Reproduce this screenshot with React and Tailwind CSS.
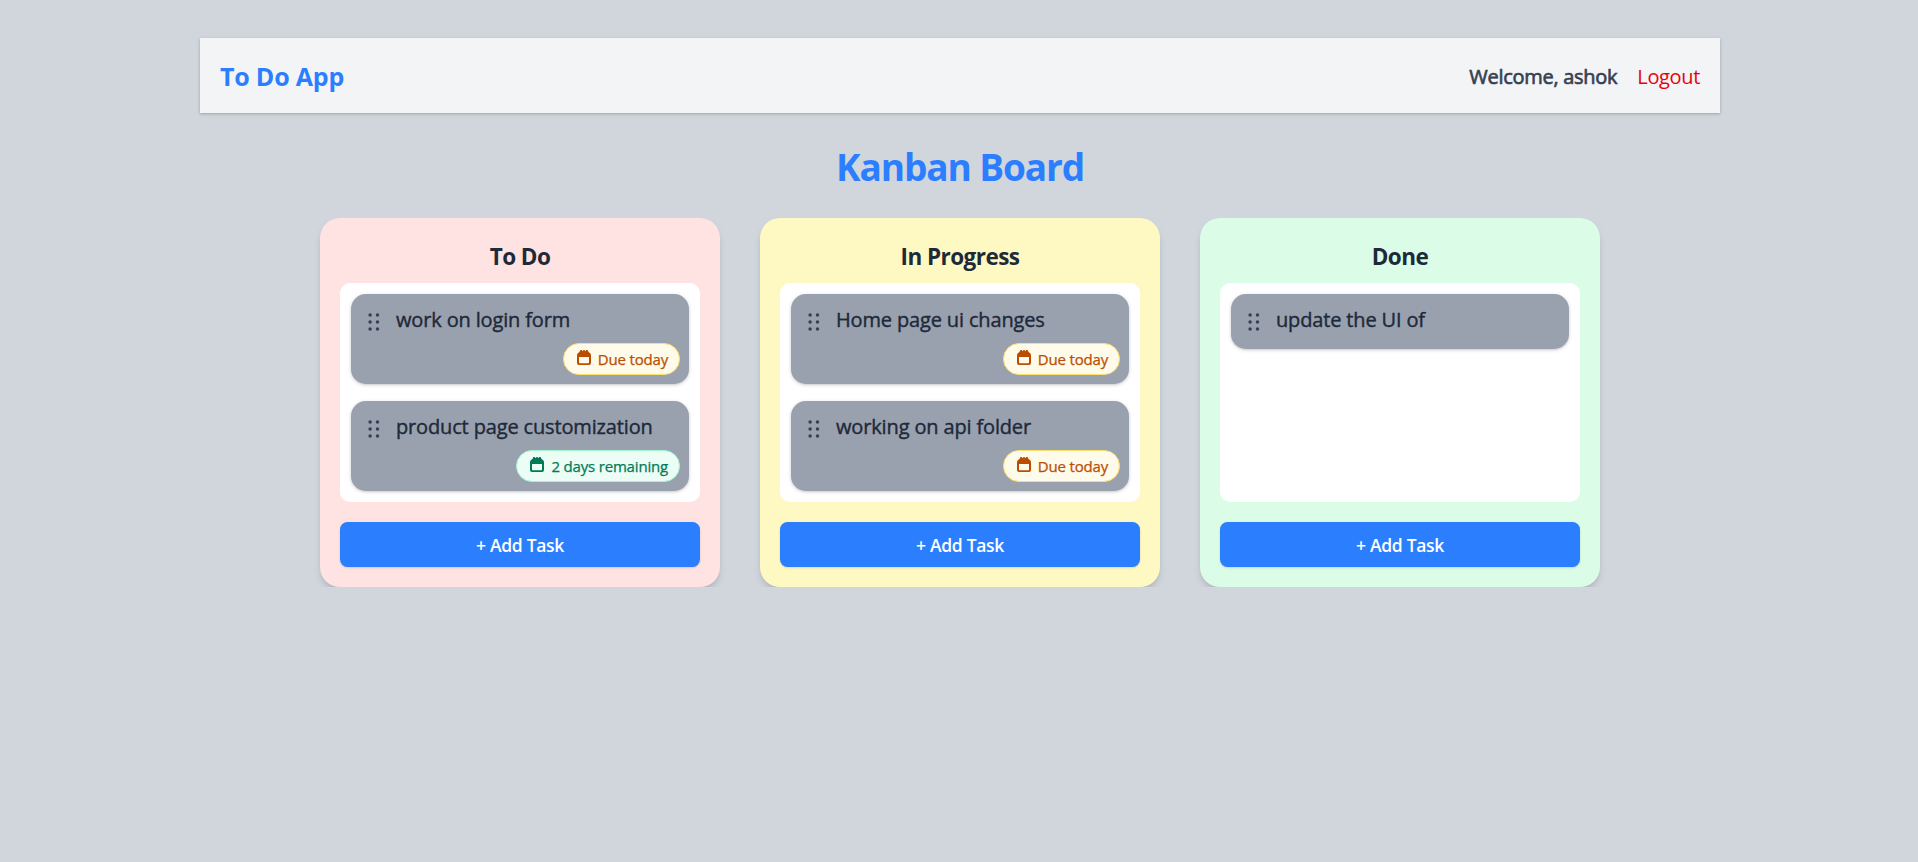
import React from "react";

const columns = [
  {
    title: "To Do",
    tone: "bg-red-100",
    tasks: [
      { text: "work on login form", due: "Due today", tone: "amber" },
      { text: "product page customization", due: "2 days remaining", tone: "emerald" },
    ],
  },
  {
    title: "In Progress",
    tone: "bg-yellow-100",
    tasks: [
      { text: "Home page ui changes", due: "Due today", tone: "amber" },
      { text: "working on api folder", due: "Due today", tone: "amber" },
    ],
  },
  {
    title: "Done",
    tone: "bg-green-100",
    tasks: [{ text: "update the UI of" }],
  },
];

const badgeTones = {
  amber: "border-[#fbdf6f] bg-amber-50 text-amber-700",
  emerald: "border-[#a4f4cf] bg-emerald-50 text-emerald-700",
};

function GripIcon() {
  return (
    <svg viewBox="0 0 12 18" className="h-[18px] w-3 shrink-0 fill-gray-700">
      {[2.1, 9.5].map((x) =>
        [2, 9, 16].map((y) => <circle key={`${x}-${y}`} cx={x} cy={y} r="1.75" />)
      )}
    </svg>
  );
}

function CalendarIcon() {
  return (
    <svg viewBox="0 0 14 15" className="mb-[3px] h-[15px] w-3.5 shrink-0 fill-current">
      <path
        fillRule="evenodd"
        d="M3 1.2V.6a.6.6 0 0 1 .6-.6h1a.6.6 0 0 1 .6.6V1h.9V.6a.6.6 0 0 1 .6-.6h.6a.6.6 0 0 1 .6.6V1h.9V.6a.6.6 0 0 1 .6-.6h1a.6.6 0 0 1 .6.6v.6L12.2 2.4A3 3 0 0 1 14 5V13a2 2 0 0 1-2 2H2a2 2 0 0 1-2-2V5A3 3 0 0 1 1.8 2.4zM2 7v5.5a.7.7 0 0 0 .7.7h8.6a.7.7 0 0 0 .7-.7V7z"
      />
    </svg>
  );
}

function Task({ text, due, tone }) {
  return (
    <div className="flex flex-col rounded-[15px] bg-[#99a1af] px-[9px] pb-[9px] shadow-[0_1px_4px_rgba(0,0,0,0.14),0_1px_2px_rgba(0,0,0,0.1)]">
      <div className="flex h-[46px] items-start pl-2 pt-[11px]">
        <div className="pt-2">
          <GripIcon />
        </div>
        <p className="ml-4 whitespace-nowrap text-[20px] leading-[30px] tracking-[-0.15px] text-gray-800 [-webkit-text-stroke:0.4px]">
          {text}
        </p>
      </div>
      {due && (
        <span
          className={`mt-[3px] flex h-8 items-center gap-[7px] self-end rounded-full border pl-[13px] pr-[11px] text-[15px] tracking-[-0.18px] [-webkit-text-stroke:0.25px] ${badgeTones[tone]}`}
        >
          <CalendarIcon />
          {due}
        </span>
      )}
    </div>
  );
}

function Column({ title, tone, tasks }) {
  return (
    <section className={`flex w-[400px] flex-col rounded-[20px] p-5 shadow-[0_5px_8px_-1px_rgba(0,0,0,0.1),0_3px_5px_-2px_rgba(0,0,0,0.1)] ${tone}`}>
      <h2 className="mb-[9px] pt-px text-center text-[22.5px] font-bold leading-[35px] tracking-[-0.55px] text-gray-800">{title}</h2>
      <div className="flex h-[219px] flex-col gap-[17px] rounded-[10px] bg-white p-[11px]">
        {tasks.map((task) => (
          <Task key={task.text} {...task} />
        ))}
      </div>
      <button className="mt-5 h-[45px] rounded-[7.5px] bg-[#2b7fff] pt-0.5 text-[17.5px] font-semibold tracking-[-0.3px] text-white shadow-sm">
        + Add Task
      </button>
    </section>
  );
}

export default function App() {
  return (
    <div className="min-h-screen bg-gray-300 pl-0.5 pt-[38px] font-['Open_Sans','Noto_Sans',sans-serif]">
      <header className="mx-auto flex h-[75px] w-[1520px] items-center justify-between bg-gray-100 px-5 pt-0.5 shadow-[0_1px_4px_rgba(0,0,0,0.12),0_1px_2px_rgba(0,0,0,0.12)]">
        <h1 className="text-[25px] font-bold tracking-[-0.2px] text-[#2b7fff]">To Do App</h1>
        <div className="flex items-center gap-5 text-[20px]">
          <span className="tracking-[-0.28px] text-gray-700 [-webkit-text-stroke:0.65px]">Welcome, ashok</span>
          <button className="tracking-[-0.35px] text-red-600">Logout</button>
        </div>
      </header>
      <main>
        <h2 className="mt-[31px] text-center text-[37px] font-bold leading-[45px] tracking-[-1.1px] text-[#2b7fff]">Kanban Board</h2>
        <div className="mt-[29px] flex justify-center gap-10 overflow-hidden">
          {columns.map((column) => (
            <Column key={column.title} {...column} />
          ))}
        </div>
      </main>
    </div>
  );
}
